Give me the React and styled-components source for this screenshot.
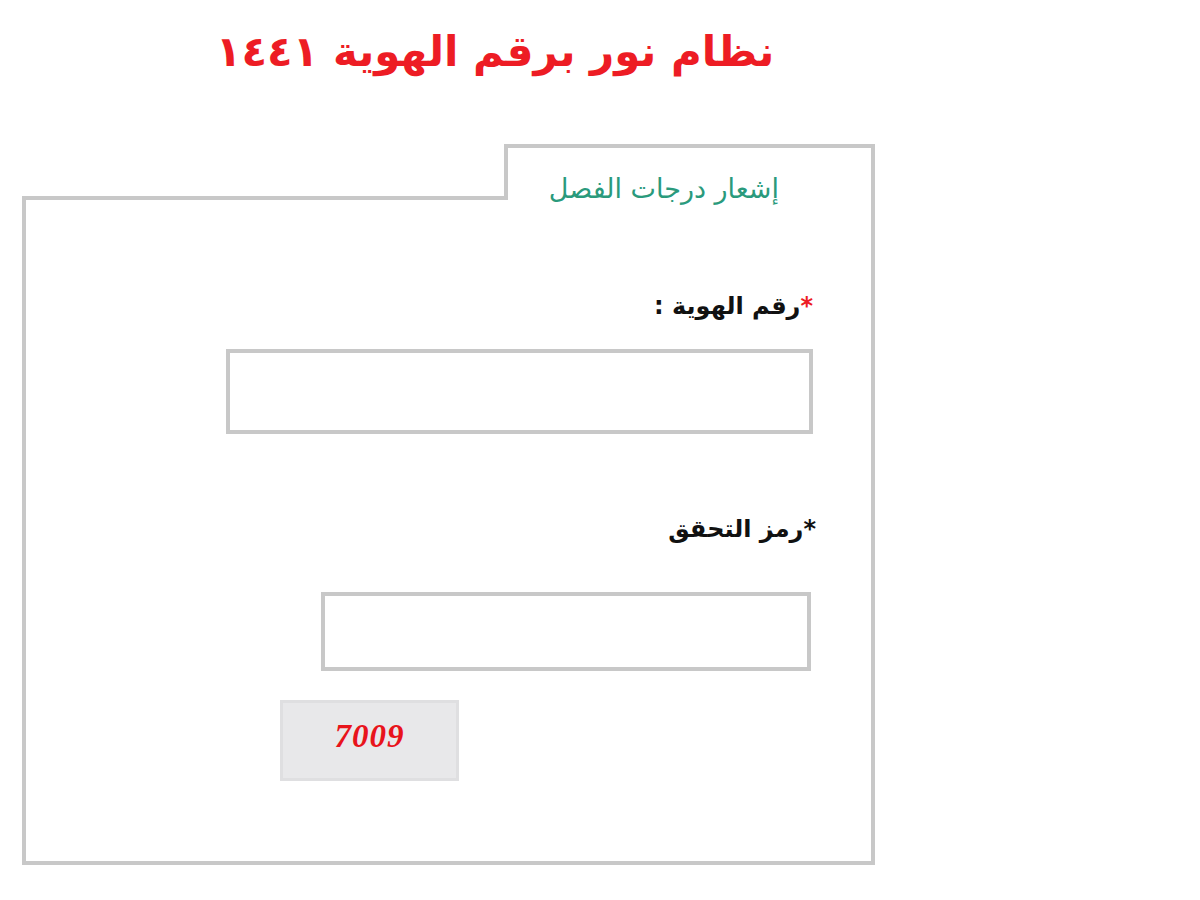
import React, { useState } from "react";
import styled, { createGlobalStyle } from "styled-components";

const GlobalStyle = createGlobalStyle`
  body {
    margin: 0;
    background: #fff;
    font-family: "DejaVu Sans", "Noto Sans", sans-serif;
  }
`;

const Page = styled.div`
  width: 1200px;
  height: 900px;
  overflow: hidden;
`;

const Title = styled.h1`
  width: 990px;
  margin: 0;
  height: 104px;
  line-height: 104px;
  text-align: center;
  direction: rtl;
  color: #ed1c24;
  font-size: 42px;
  font-weight: bold;
`;

const Panel = styled.div`
  width: 853px;
  margin: 40px 0 0 22px;
  direction: rtl;
`;

const TabRow = styled.div`
  display: flex;
  height: 56px;
`;

const Tab = styled.div`
  width: 371px;
  box-sizing: border-box;
  border: 4px solid #c8c8c8;
  border-bottom: none;
  padding-right: 92px;
  padding-top: 24px;
  color: #2a9a7c;
  font-size: 27px;
  line-height: 34px;
`;

const TabFiller = styled.div`
  flex: 1;
  border-bottom: 4px solid #c8c8c8;
`;

const Body = styled.div`
  height: 665px;
  box-sizing: border-box;
  border: 4px solid #c8c8c8;
  border-top: none;
  padding: 86px 58px 0 0;
`;

const Label = styled.label`
  display: block;
  font-size: 24px;
  font-weight: bold;
  color: #111;
  line-height: 40px;
  margin-right: ${(p) => p.$shift || 0}px;
`;

const Star = styled.span`
  color: ${(p) => (p.$red ? "#ed1c24" : "#111")};
`;

const Input = styled.input`
  display: block;
  box-sizing: border-box;
  width: ${(p) => p.$w}px;
  height: ${(p) => p.$h}px;
  margin-top: ${(p) => p.$top}px;
  margin-right: ${(p) => p.$right || 0}px;
  border: 4px solid #c8c8c8;
  background: #fff;
  outline: none;
  font-size: 20px;
`;

const Group = styled.div`
  margin-top: ${(p) => p.$top}px;
`;

const Captcha = styled.div`
  width: 179px;
  height: 81px;
  box-sizing: border-box;
  margin: 29px 354px 0 0;
  border: 3px solid #dfdfe1;
  background: #e8e8ea;
  display: flex;
  align-items: center;
  justify-content: center;
  direction: ltr;
  color: #e8141c;
  font-family: "Liberation Serif", serif;
  font-style: italic;
  font-weight: bold;
  font-size: 33px;
  letter-spacing: 1px;
  padding-bottom: 8px;
`;

const App = () => {
  const [id, setId] = useState("");
  const [code, setCode] = useState("");
  return (
    <Page>
      <GlobalStyle />
      <Title>نظام نور برقم الهوية ١٤٤١</Title>
      <Panel>
        <TabRow>
          <Tab>إشعار درجات الفصل</Tab>
          <TabFiller />
        </TabRow>
        <Body>
          <Group $top={0}>
            <Label>
              <Star $red>*</Star>رقم الهوية :
            </Label>
            <Input
              $w={587}
              $h={85}
              $top={23}
              value={id}
              onChange={(e) => setId(e.target.value)}
            />
          </Group>
          <Group $top={75}>
            <Label $shift={-3}>
              <Star>*</Star>رمز التحقق
            </Label>
            <Input
              $w={490}
              $h={79}
              $top={43}
              $right={2}
              value={code}
              onChange={(e) => setCode(e.target.value)}
            />
          </Group>
          <Captcha>7009</Captcha>
        </Body>
      </Panel>
    </Page>
  );
};

export default App;
